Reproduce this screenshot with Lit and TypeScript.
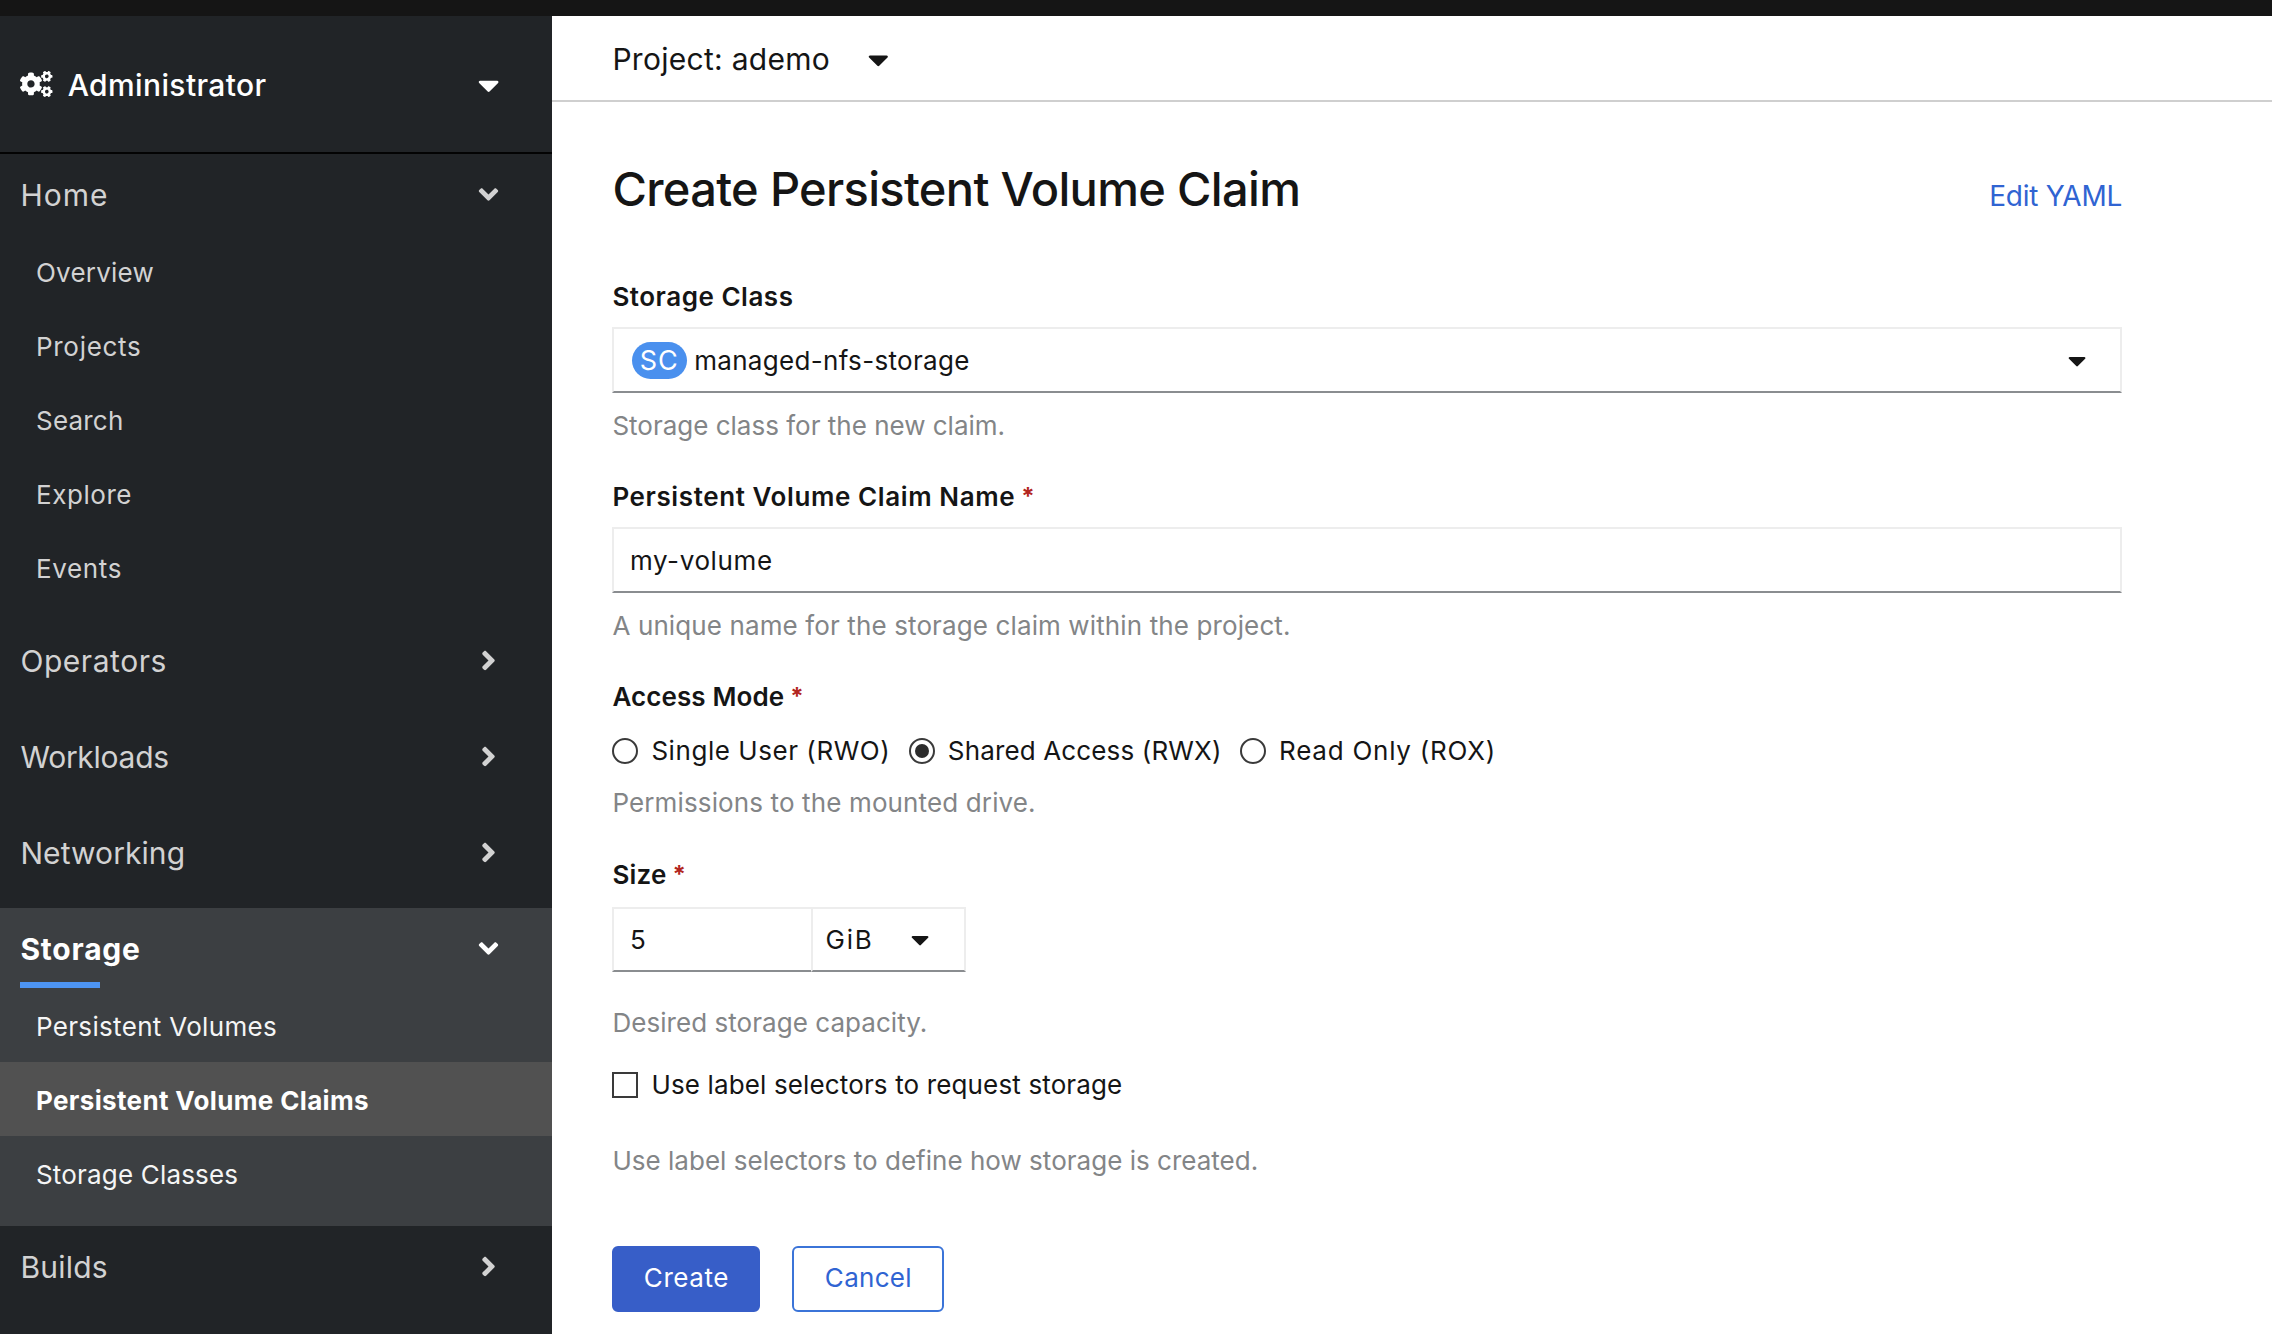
import { LitElement, html, css, svg, nothing } from "lit";
import { customElement } from "lit/decorators.js";
import { classMap } from "lit/directives/class-map.js";
import { styleMap } from "lit/directives/style-map.js";

interface Leaf {
  label: string;
  track: number;
  current?: boolean;
}

interface Section {
  label: string;
  track: number;
  active?: boolean;
  items?: Leaf[];
}

const NAV: Section[] = [
  {
    label: "Home",
    track: 1,
    items: [
      { label: "Overview", track: 0.22 },
      { label: "Projects", track: 0.7 },
      { label: "Search", track: 0.2 },
      { label: "Explore", track: 0.55 },
      { label: "Events", track: 0.65 },
    ],
  },
  { label: "Operators", track: 0.55 },
  { label: "Workloads", track: -0.27 },
  { label: "Networking", track: 0.08 },
  {
    label: "Storage",
    track: 0.8,
    active: true,
    items: [
      { label: "Persistent Volumes", track: 0.32 },
      { label: "Persistent Volume Claims", track: 0.35, current: true },
      { label: "Storage Classes", track: 0.18 },
    ],
  },
  { label: "Builds", track: 0.22 },
];

const MODES = [
  { label: "Single User (RWO)", track: 0.55, checked: false },
  { label: "Shared Access (RWX)", track: 0.14, checked: true },
  { label: "Read Only (ROX)", track: 0.76, checked: false },
];

// Text run with its own tracking, in pixels.
const t = (text: string, track: number) =>
  html`<span style=${styleMap({ letterSpacing: `${track}px` })}>${text}</span>`;

const caret = (size: number) => html`<svg
  class="caret"
  width=${(size * 320) / 512}
  height=${size}
  viewBox="0 0 320 512"
>
  <path
    d="M31.3 192h257.3c17.8 0 26.7 21.5 14.1 34.1L174.1 354.7c-7.8 7.8-20.5 7.8-28.3 0L17.2 226.1C4.6 213.5 13.5 192 31.3 192z"
  />
</svg>`;

const angle = (open: boolean) => html`<svg
  class="angle"
  width="31"
  height="31"
  viewBox=${open ? "-96 0 512 512" : "-128 0 512 512"}
>
  ${open
    ? svg`<path d="M143 352.3L7 216.3c-9.4-9.4-9.4-24.6 0-33.9l22.6-22.6c9.4-9.4 24.6-9.4 33.9 0l96.4 96.4 96.4-96.4c9.4-9.4 24.6-9.4 33.9 0l22.6 22.6c9.4 9.4 9.4 24.6 0 33.9l-136 136c-9.2 9.4-24.4 9.4-33.8 0z"/>`
    : svg`<path d="M224.3 273l-136 136c-9.4 9.4-24.6 9.4-33.9 0l-22.6-22.6c-9.4-9.4-9.4-24.6 0-33.9l96.4-96.4-96.4-96.4c-9.4-9.4-9.4-24.6 0-33.9L54.3 103c9.4-9.4 24.6-9.4 33.9 0l136 136c9.5 9.4 9.5 24.6.1 34z"/>`}
</svg>`;

const SMALL_GEAR =
  "M512.1 191l-8.2 14.3c-3 5.3-9.4 7.5-15.1 5.4-11.8-4.4-22.6-10.7-32.1-18.6-4.6-3.8-5.8-10.5-2.8-15.7l8.2-14.3c-6.9-8-12.3-17.3-15.9-27.4h-16.5c-6 0-11.2-4.3-12.2-10.3-2-12-2.1-24.6 0-37.1 1-6 6.2-10.4 12.2-10.4h16.5c3.6-10.1 9-19.4 15.9-27.4l-8.2-14.3c-3-5.2-1.9-11.9 2.8-15.7 9.5-7.9 20.4-14.2 32.1-18.6 5.7-2.1 12.1.1 15.1 5.4l8.2 14.3c10.5-1.9 21.2-1.9 31.7 0L552 6.3c3-5.3 9.4-7.5 15.1-5.4 11.8 4.4 22.6 10.7 32.1 18.6 4.6 3.8 5.8 10.5 2.8 15.7l-8.2 14.3c6.9 8 12.3 17.3 15.9 27.4h16.5c6 0 11.2 4.3 12.2 10.3 2 12 2.1 24.6 0 37.1-1 6-6.2 10.4-12.2 10.4h-16.5c-3.6 10.1-9 19.4-15.9 27.4l8.2 14.3c3 5.2 1.9 11.9-2.8 15.7-9.5 7.9-20.4 14.2-32.1 18.6-5.7 2.1-12.1-.1-15.1-5.4l-8.2-14.3c-10.4 1.9-21.2 1.9-31.7 0zm-10.5-58.8c38.5 29.6 82.4-14.3 52.8-52.8-38.5-29.7-82.4 14.3-52.8 52.8z";
const BIG_GEAR =
  "M386.3 286.1l33.7 16.8c10.1 5.8 14.5 18.1 10.5 29.1-8.9 24.2-26.4 46.4-42.6 65.8-7.4 8.9-20.2 11.1-30.3 5.3l-29.1-16.8c-16 13.7-34.6 24.6-54.9 31.7v33.6c0 11.6-8.3 21.6-19.7 23.6-24.6 4.2-50.4 4.4-75.9 0-11.5-2-20-11.9-20-23.6V418c-20.3-7.2-38.9-18-54.9-31.7L74 403c-10 5.8-22.9 3.6-30.3-5.3-16.2-19.4-33.3-41.6-42.2-65.7-4-10.9.4-23.2 10.5-29.1l33.3-16.8c-3.9-20.9-3.9-42.4 0-63.4L12 205.8c-10.1-5.8-14.6-18.1-10.5-29 8.9-24.2 26-46.4 42.2-65.8 7.4-8.9 20.2-11.1 30.3-5.3l29.1 16.8c16-13.7 34.6-24.6 54.9-31.7V57.1c0-11.5 8.2-21.5 19.6-23.5 24.6-4.2 50.5-4.4 76-.1 11.5 2 20 11.9 20 23.6v33.6c20.3 7.2 38.9 18 54.9 31.7l29.1-16.8c10-5.8 22.9-3.6 30.3 5.3 16.2 19.4 33.2 41.6 42.1 65.8 4 10.9.1 23.2-10 29.1l-33.7 16.8c3.9 21 3.9 42.5 0 63.5zm-117.6 21.1c59.2-77-28.7-164.9-105.7-105.7-59.2 77 28.7 164.9 105.7 105.7z";

@customElement("console-nav")
export class ConsoleNav extends LitElement {
  static styles = css`
    :host {
      display: flex;
      flex-direction: column;
      width: 552px;
      flex: none;
      background: #212427;
      color: #d2d2d2;
      white-space: nowrap;
    }
    svg {
      display: block;
      flex: none;
      fill: currentColor;
    }
    .switcher {
      box-sizing: border-box;
      height: 138px;
      padding: 2px 53px 0 20.4px;
      border-bottom: 2px solid #030303;
      display: flex;
      align-items: center;
      color: #fff;
      font-size: 30px;
      font-weight: 500;
    }
    .cogs {
      margin: -2px 14.8px 0 0;
    }
    .switcher .caret,
    .head .angle {
      margin-left: auto;
    }
    .section {
      padding-bottom: 16px;
    }
    .head {
      box-sizing: border-box;
      height: 80px;
      padding: 2px 48px 0 20.4px;
      display: flex;
      align-items: center;
      font-size: 30px;
    }
    .head .angle {
      margin-top: -2px;
    }
    .active {
      background: #3c3f42;
      color: #f5f5f5;
    }
    .active .head {
      position: relative;
      font-weight: 700;
      color: #fff;
    }
    .active .head::after {
      content: "";
      position: absolute;
      left: 20.4px;
      bottom: 0;
      width: 80px;
      height: 6px;
      background: #4d94f2;
    }
    .leaf {
      box-sizing: border-box;
      height: 74px;
      padding: 3px 0 0 36px;
      display: flex;
      align-items: center;
      font-size: 26px;
    }
    .current {
      background: #515151;
      color: #fff;
      font-weight: 700;
    }
  `;

  render() {
    return html`
      <div class="switcher">
        <svg class="cogs" width="32.5" height="26" viewBox="0 0 640 512">
          <path d=${BIG_GEAR} />
          <path d=${SMALL_GEAR} />
          <path d=${SMALL_GEAR} transform="translate(0 299)" />
        </svg>
        ${t("Administrator", 0.38)} ${caret(34)}
      </div>
      ${NAV.map(
        (s) => html`<div class=${classMap({ section: true, active: !!s.active })}>
          <div class="head">${t(s.label, s.track)} ${angle(!!s.items)}</div>
          ${s.items
            ? s.items.map(
                (l) =>
                  html`<div class=${classMap({ leaf: true, current: !!l.current })}>
                    ${t(l.label, l.track)}
                  </div>`
              )
            : nothing}
        </div>`
      )}
    `;
  }
}

@customElement("claim-form")
export class ClaimForm extends LitElement {
  static styles = css`
    :host {
      display: block;
      flex: 1;
      color: #151515;
      background: #fff;
      font-size: 26px;
      white-space: nowrap;
    }
    svg {
      display: block;
      flex: none;
      fill: currentColor;
    }
    .project {
      box-sizing: border-box;
      height: 86px;
      padding: 2px 0 0 60.4px;
      border-bottom: 2px solid #cfcfcf;
      display: flex;
      align-items: center;
      gap: 38px;
      font-size: 30px;
    }
    .form {
      width: 1509.6px;
      padding: 59px 0 0 60.4px;
    }
    .titlebar {
      display: flex;
      justify-content: space-between;
      align-items: baseline;
      height: 56px;
      margin-bottom: 60px;
    }
    h1 {
      margin: 0;
      font-size: 47px;
      font-weight: 450;
      line-height: 56px;
    }
    .link {
      color: #3064d2;
      font-size: 28px;
    }
    .label,
    .help,
    .choices {
      height: 40px;
      line-height: 40px;
    }
    .label {
      display: flex;
      gap: 6px;
      font-weight: 600;
      margin-bottom: 10px;
    }
    .req {
      color: #b3261e;
      font-size: 24px;
      font-weight: 700;
    }
    .help {
      color: #838587;
      margin: 13px 0 31.5px;
    }
    .box {
      box-sizing: border-box;
      height: 65.5px;
      border: 2px solid #ededed;
      border-bottom: 2px solid #8a8d90;
      display: flex;
      align-items: center;
      padding: 1px 34px 0 15.5px;
    }
    .select {
      padding-left: 17.6px;
    }
    .select .caret {
      margin-left: auto;
    }
    .pill {
      width: 54.7px;
      height: 37.4px;
      margin-right: 7.5px;
      border-radius: 19px;
      background: #4a90ee;
      color: #fff;
      font-size: 27px;
      display: flex;
      align-items: center;
      justify-content: center;
    }
    .choices {
      display: flex;
      margin-top: 14px;
    }
    .choices + .help {
      margin-top: 12px;
    }
    .choice {
      display: flex;
      align-items: center;
      margin-right: 18.5px;
    }
    .mark {
      box-sizing: border-box;
      width: 26px;
      height: 26px;
      margin-right: 13px;
      border: 2px solid #3a3a3a;
      display: flex;
      align-items: center;
      justify-content: center;
    }
    .round {
      border-radius: 50%;
    }
    .dot {
      width: 14px;
      height: 14px;
      border-radius: 50%;
      background: #2c2c2c;
    }
    .size {
      display: flex;
      width: 353.6px;
      margin: 12px 0 30.5px;
    }
    .amount {
      width: 198.6px;
      border-right-width: 0;
    }
    .unit {
      flex: 1;
      padding: 0 35px 0 12.5px;
      justify-content: space-between;
    }
    .size + .help {
      margin: 0 0 22px;
    }
    .check + .help {
      margin: 36px 0 65px;
    }
    .actions {
      display: flex;
      gap: 32px;
    }
    .button {
      box-sizing: border-box;
      height: 66px;
      padding-bottom: 2px;
      border: 2px solid #3b74d8;
      border-radius: 6px;
      display: flex;
      align-items: center;
      justify-content: center;
      width: 152px;
      color: #3064d2;
    }
    .primary {
      width: 148px;
      border-color: #375ec8;
      background: #375ec8;
      color: #fff;
    }
  `;

  render() {
    const req = html`<span class="req">*</span>`;
    return html`
      <div class="project">${t("Project: ademo", 0.28)} ${caret(33)}</div>
      <div class="form">
        <div class="titlebar">
          <h1>${t("Create Persistent Volume Claim", -0.67)}</h1>
          <span class="link">${t("Edit YAML", -0.27)}</span>
        </div>

        <div class="label">${t("Storage Class", 0.52)}</div>
        <div class="box select">
          <span class="pill">${t("SC", 1)}</span>
          ${t("managed-nfs-storage", 0.32)} ${caret(29)}
        </div>
        <div class="help">${t("Storage class for the new claim.", 0)}</div>

        <div class="label">${t("Persistent Volume Claim Name", 0.6)} ${req}</div>
        <div class="box">${t("my-volume", 0.62)}</div>
        <div class="help">
          ${t("A unique name for the storage claim within the project.", 0.12)}
        </div>

        <div class="label">${t("Access Mode", 0.1)} ${req}</div>
        <div class="choices">
          ${MODES.map(
            (m) => html`<div class="choice">
              <span class="mark round">
                ${m.checked ? html`<span class="dot"></span>` : nothing}
              </span>
              ${t(m.label, m.track)}
            </div>`
          )}
        </div>
        <div class="help">${t("Permissions to the mounted drive.", 0.13)}</div>

        <div class="label">${t("Size", 0.2)} ${req}</div>
        <div class="size">
          <div class="box amount">5</div>
          <div class="box unit">${t("GiB", 1.8)} ${caret(29)}</div>
        </div>
        <div class="help">${t("Desired storage capacity.", 0.05)}</div>

        <div class="choices check">
          <div class="choice">
            <span class="mark"></span>
            ${t("Use label selectors to request storage", 0.14)}
          </div>
        </div>
        <div class="help">
          ${t("Use label selectors to define how storage is created.", 0.02)}
        </div>

        <div class="actions">
          <div class="button primary">${t("Create", 0.55)}</div>
          <div class="button">${t("Cancel", 0.3)}</div>
        </div>
      </div>
    `;
  }
}

@customElement("app-root")
export class AppRoot extends LitElement {
  static styles = css`
    :host {
      display: flex;
      flex-direction: column;
      height: 1334px;
      overflow: hidden;
      background: #fff;
      font-family: Inter, "Noto Sans", sans-serif;
    }
    .masthead {
      flex: none;
      height: 16px;
      background: #151515;
    }
    .body {
      flex: 1;
      min-height: 0;
      display: flex;
    }
  `;

  render() {
    return html`
      <div class="masthead"></div>
      <div class="body">
        <console-nav></console-nav>
        <claim-form></claim-form>
      </div>
    `;
  }
}
